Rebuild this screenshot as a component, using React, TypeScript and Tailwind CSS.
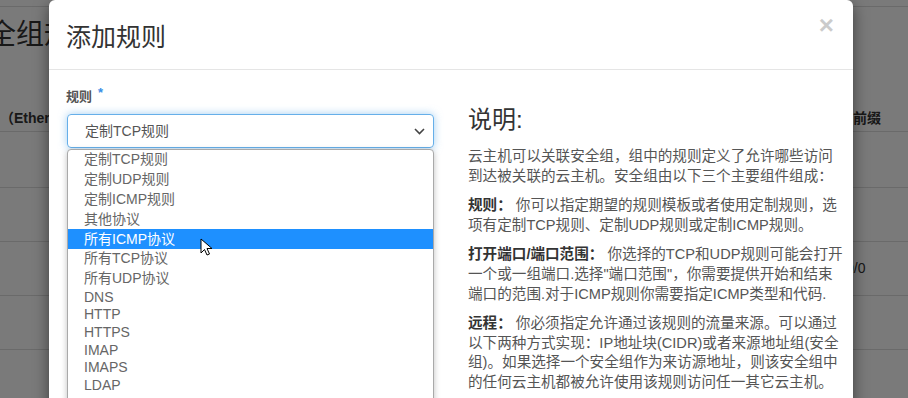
const ff = "font-['Liberation_Sans','Noto_Sans_CJK_SC',sans-serif]";

const options: { label: string; cjk: boolean; active?: boolean }[] = [
  { label: "定制TCP规则", cjk: true },
  { label: "定制UDP规则", cjk: true },
  { label: "定制ICMP规则", cjk: true },
  { label: "其他协议", cjk: true },
  { label: "所有ICMP协议", cjk: true, active: true },
  { label: "所有TCP协议", cjk: true },
  { label: "所有UDP协议", cjk: true },
  { label: "DNS", cjk: false },
  { label: "HTTP", cjk: false },
  { label: "HTTPS", cjk: false },
  { label: "IMAP", cjk: false },
  { label: "IMAPS", cjk: false },
  { label: "LDAP", cjk: false },
];

const Cursor = () => (
  <svg className="absolute left-[132px] top-[9px]" width="15" height="20" viewBox="0 0 15 20">
    <path d="M1 1 L1 15 L4.5 11.5 L7 17 L9.5 16 L7 10.5 L12 10.5 Z" fill="#fff" stroke="#000" strokeWidth="1" strokeLinejoin="round" />
  </svg>
);

const Page = () => (
  <div className={`${ff} h-[398px] w-[908px] overflow-hidden bg-white pt-[6px] text-[#333]`}>
    <div className="border-t border-[#ddd] pt-[13px]">
      <div className="ml-[-40px] text-[28px] leading-[30px]">安全组规则</div>
    </div>
    <div className="mt-[56px] flex h-[26px] items-center border-b border-[#ddd] text-[14px] font-bold">
      <span>（Ethertype）</span>
      <span className="ml-auto w-[55px]">前缀</span>
    </div>
    <div className="h-[56px] border-b border-[#ddd]" />
    <div className="h-[54px] border-b border-[#ddd]" />
    <div className="flex h-[54px] items-center border-b border-[#ddd] text-[14px]">
      <span className="ml-[846px]">0/0</span>
    </div>
    <div className="h-[54px] border-b border-[#ddd]" />
  </div>
);

export default function App() {
  return (
    <div className="relative h-[398px] w-[908px] overflow-hidden">
      <Page />
      <div className="absolute inset-0 bg-black/[0.52]" />
      <div
        className={`${ff} absolute left-[49px] top-0 h-[420px] w-[804px] rounded-[6px] bg-white text-[#333] shadow-[0_5px_15px_rgba(0,0,0,0.5)]`}
      >
        <div className="flex h-[70px] items-start justify-between border-b border-[#e5e5e5] px-[17px] pt-[13px]">
          <h4 className="mt-[9px] text-[25px] leading-[30px] text-[#333]">添加规则</h4>
          <button className="mr-[2px] text-[26px] font-bold leading-[24px] text-black opacity-20">×</button>
        </div>
        <div className="grid grid-cols-[367px_368px] gap-x-[34px] pl-[18px] pt-[17px]">
          <div>
            <label className="-ml-px flex h-[20px] items-center text-[13px] font-bold text-[#555]">
              规则
              <span className="mb-[8px] ml-[6px] text-[13px] text-[#3a8ee6]">*</span>
            </label>
            <div className="mt-[7px] flex h-[34px] items-center justify-between rounded-[4px] border border-[#66afe9] pl-[17px] pr-[8px] text-[14px] text-[#555] shadow-[0_0_8px_rgba(102,175,233,0.6)]">
              <span>定制TCP规则</span>
              <svg width="11" height="7" viewBox="0 0 11 7">
                <path d="M1 1 L5.5 5.5 L10 1" fill="none" stroke="#444" strokeWidth="1.6" />
              </svg>
            </div>
            <div className="relative mt-px h-[260px] rounded-[4px] border border-[#a9a9a9] bg-white text-[14px] text-[#666] shadow-[0_2px_6px_rgba(0,0,0,0.25)]">
              {options.map((o) => (
                <div
                  key={o.label}
                  className={`relative flex items-center pl-[16px] ${o.cjk ? "h-[19.8px]" : "h-[17.6px]"} ${
                    o.active ? "bg-[#1e90ff] text-white" : ""
                  }`}
                >
                  {o.label}
                  {o.active && <Cursor />}
                </div>
              ))}
            </div>
          </div>
          <div className="whitespace-nowrap text-[14.6px] leading-[19.6px] text-[#555]">
            <h3 className="mt-[20px] text-[24px] leading-[26px] text-[#333]">说明:</h3>
            <p className="mt-[14px]">
              云主机可以关联安全组，组中的规则定义了允许哪些访问
              <br />
              到达被关联的云主机。安全组由以下三个主要组件组成：
            </p>
            <p className="mt-[10px]">
              <b className="text-[#333]">规则：</b> 你可以指定期望的规则模板或者使用定制规则，选
              <br />
              项有定制TCP规则、定制UDP规则或定制ICMP规则。
            </p>
            <p className="mt-[10px]">
              <b className="text-[#333]">打开端口/端口范围：</b> 你选择的TCP和UDP规则可能会打开
              <br />
              一个或一组端口.选择"端口范围"，你需要提供开始和结束
              <br />
              端口的范围.对于ICMP规则你需要指定ICMP类型和代码.
            </p>
            <p className="mt-[10px]">
              <b className="text-[#333]">远程：</b> 你必须指定允许通过该规则的流量来源。可以通过
              <br />
              以下两种方式实现：IP地址块(CIDR)或者来源地址组(安全
              <br />
              组)。如果选择一个安全组作为来访源地址，则该安全组中
              <br />
              的任何云主机都被允许使用该规则访问任一其它云主机。
            </p>
          </div>
        </div>
      </div>
    </div>
  );
}
